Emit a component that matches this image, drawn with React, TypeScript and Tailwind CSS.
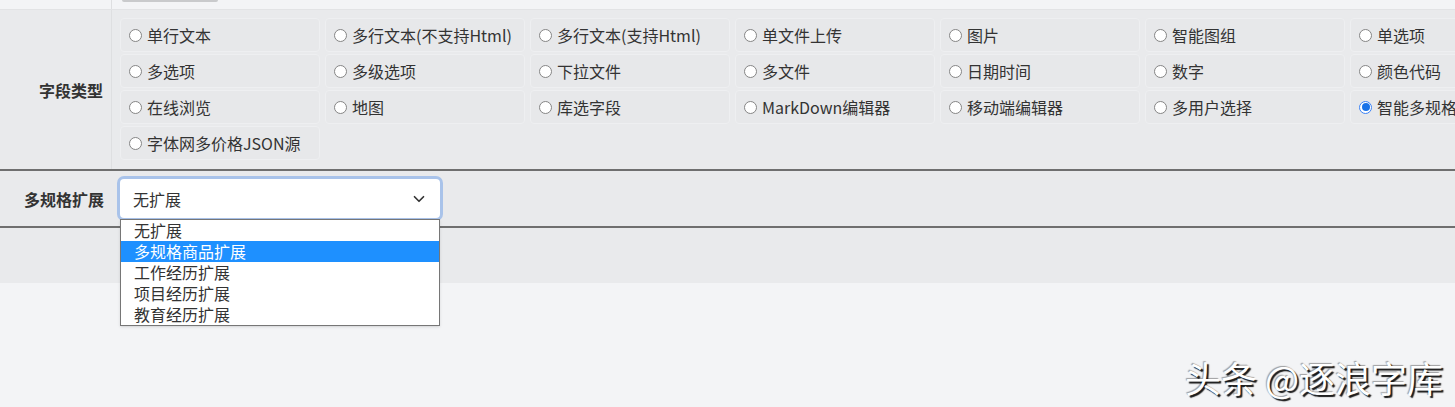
import { ChevronDown } from 'lucide-react';

const fieldTypes = [
  '单行文本',
  '多行文本(不支持Html)',
  '多行文本(支持Html)',
  '单文件上传',
  '图片',
  '智能图组',
  '单选项',
  '多选项',
  '多级选项',
  '下拉文件',
  '多文件',
  '日期时间',
  '数字',
  '颜色代码',
  '在线浏览',
  '地图',
  '库选字段',
  'MarkDown编辑器',
  '移动端编辑器',
  '多用户选择',
  '智能多规格',
  '字体网多价格JSON源',
];

const extOptions = ['无扩展', '多规格商品扩展', '工作经历扩展', '项目经历扩展', '教育经历扩展'];

function Radio({ checked }: { checked?: boolean }) {
  if (checked) {
    return (
      <span className="w-[13px] h-[13px] shrink-0 rounded-full border border-[#3b82f6] bg-white flex items-center justify-center">
        <span className="w-[8px] h-[8px] rounded-full bg-[#1a73e8]" />
      </span>
    );
  }
  return <span className="w-[13px] h-[13px] shrink-0 rounded-full border border-[#858585] bg-white" />;
}

export default function App() {
  return (
    <div className="relative w-[1455px] h-[407px] overflow-hidden bg-[#f3f4f6] text-[#333] font-['Noto_Sans_CJK_SC','Noto_Sans',sans-serif]">
      {/* tail of the previous row */}
      <div className="flex h-[10px] border-b border-[#e2e3e5]">
        <div className="w-[112px] shrink-0 border-r border-[#dedfe1]" />
        <div className="pl-[10px]">
          <div className="w-[96px] h-[2px] rounded-b bg-[#c9cacc]" />
        </div>
      </div>

      {/* 字段类型 */}
      <div className="flex bg-[#e9eaec] border-b-2 border-[#6f6f6f]">
        <div className="w-[112px] shrink-0 border-r border-[#dedfe1] flex items-center justify-end pr-[8px] text-[16px] font-bold">
          字段类型
        </div>
        <div className="pl-[8px] pt-[8px] pb-[9px] grid grid-cols-[repeat(7,200px)] gap-x-[5px] gap-y-[2px]">
          {fieldTypes.map((t) => (
            <div
              key={t}
              className="h-[34px] rounded-[4px] border border-[#eeeff1] bg-[#e7e8ea] flex items-center gap-[5px] pl-[8px] text-[16px] whitespace-nowrap"
            >
              <Radio checked={t === '智能多规格'} />
              <span>{t}</span>
            </div>
          ))}
        </div>
      </div>

      {/* 多规格扩展 */}
      <div className="flex items-center h-[57px] bg-[#e9eaec] border-b-2 border-[#6f6f6f]">
        <div className="w-[112px] shrink-0 flex justify-end pr-[8px] text-[16px] font-bold">多规格扩展</div>
        <div className="relative pl-[8px]">
          <div className="w-[320px] h-[39px] rounded-[4px] bg-white ring-[3px] ring-[#a9c3ea] flex items-center justify-between pl-[13px] pr-[12px] text-[16px]">
            <span>无扩展</span>
            <ChevronDown className="w-[18px] h-[18px] text-[#333]" strokeWidth={2.25} />
          </div>
          <ul className="absolute left-[8px] top-[40px] z-10 w-[320px] bg-white border border-[#767676] shadow-sm text-[16px] leading-[21px]">
            {extOptions.map((o, i) => (
              <li key={o} className={i === 1 ? 'pl-[13px] bg-[#1e90ff] text-white' : 'pl-[13px]'}>
                {o}
              </li>
            ))}
          </ul>
        </div>
      </div>

      <div className="h-[55px] bg-[#e9eaec]" />

      <div className="absolute right-[12px] bottom-[10px] text-[36px] leading-[40px] text-white font-['Noto_Sans_CJK_SC',sans-serif] [text-shadow:2px_2px_1px_rgba(0,0,0,0.9),-1px_-1px_1px_rgba(0,0,0,0.35)]">
        头条 @逐浪字库
      </div>
    </div>
  );
}
